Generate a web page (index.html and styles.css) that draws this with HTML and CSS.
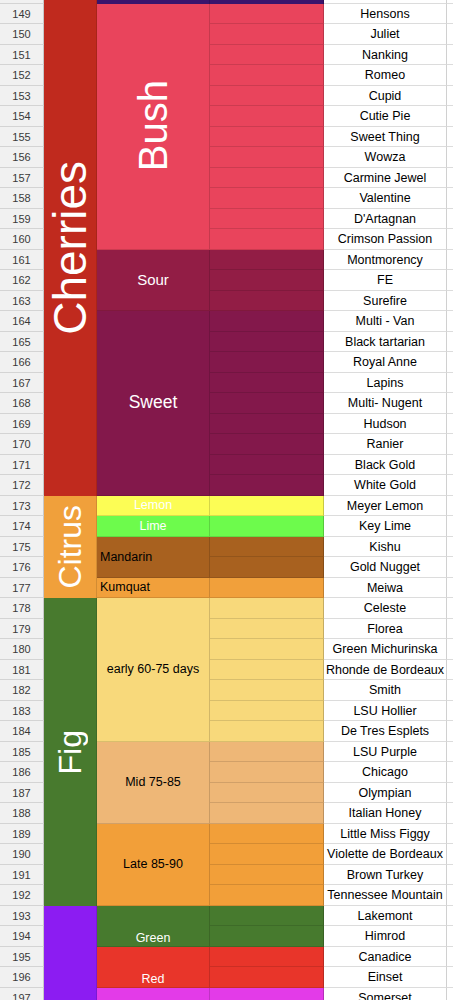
FILE: index.html
```html
<!DOCTYPE html>
<html lang="en">
<head>
    <meta charset="UTF-8">
    <meta name="viewport" content="width=device-width, initial-scale=1.0">
    <title>Fruit Varieties</title>
    <link rel="stylesheet" href="styles.css">
</head>
<body>
    <div class="sheet">
        <!-- partial row above 149 -->
        <div class="n"></div>
        <div class="a cherries s25"><span class="vert big">Cherries</span></div>
        <div class="b top"></div><div class="c top"></div><div class="v"></div><div class="e"></div>

        <div class="n">149</div>
        <div class="b bush s12 light"><span class="vert mid">Bush</span></div>
        <div class="c bush"></div><div class="v">Hensons</div><div class="e"></div>
        <div class="n">150</div><div class="c bush"></div><div class="v">Juliet</div><div class="e"></div>
        <div class="n">151</div><div class="c bush"></div><div class="v">Nanking</div><div class="e"></div>
        <div class="n">152</div><div class="c bush"></div><div class="v">Romeo</div><div class="e"></div>
        <div class="n">153</div><div class="c bush"></div><div class="v">Cupid</div><div class="e"></div>
        <div class="n">154</div><div class="c bush"></div><div class="v">Cutie Pie</div><div class="e"></div>
        <div class="n">155</div><div class="c bush"></div><div class="v">Sweet Thing</div><div class="e"></div>
        <div class="n">156</div><div class="c bush"></div><div class="v">Wowza</div><div class="e"></div>
        <div class="n">157</div><div class="c bush"></div><div class="v">Carmine Jewel</div><div class="e"></div>
        <div class="n">158</div><div class="c bush"></div><div class="v">Valentine</div><div class="e"></div>
        <div class="n">159</div><div class="c bush"></div><div class="v">D'Artagnan</div><div class="e"></div>
        <div class="n">160</div><div class="c bush"></div><div class="v">Crimson Passion</div><div class="e"></div>

        <div class="n">161</div>
        <div class="b sour s3 light sz15">Sour</div>
        <div class="c sour"></div><div class="v">Montmorency</div><div class="e"></div>
        <div class="n">162</div><div class="c sour"></div><div class="v">FE</div><div class="e"></div>
        <div class="n">163</div><div class="c sour"></div><div class="v">Surefire</div><div class="e"></div>

        <div class="n">164</div>
        <div class="b sweet s9 light sz17">Sweet</div>
        <div class="c sweet"></div><div class="v">Multi - Van</div><div class="e"></div>
        <div class="n">165</div><div class="c sweet"></div><div class="v">Black tartarian</div><div class="e"></div>
        <div class="n">166</div><div class="c sweet"></div><div class="v">Royal Anne</div><div class="e"></div>
        <div class="n">167</div><div class="c sweet"></div><div class="v">Lapins</div><div class="e"></div>
        <div class="n">168</div><div class="c sweet"></div><div class="v">Multi- Nugent</div><div class="e"></div>
        <div class="n">169</div><div class="c sweet"></div><div class="v">Hudson</div><div class="e"></div>
        <div class="n">170</div><div class="c sweet"></div><div class="v">Ranier</div><div class="e"></div>
        <div class="n">171</div><div class="c sweet"></div><div class="v">Black Gold</div><div class="e"></div>
        <div class="n">172</div><div class="c sweet"></div><div class="v">White Gold</div><div class="e"></div>

        <div class="n">173</div>
        <div class="a citrus s5"><span class="vert small">Citrus</span></div>
        <div class="b lemon light">Lemon</div>
        <div class="c lemon"></div><div class="v">Meyer Lemon</div><div class="e"></div>
        <div class="n">174</div>
        <div class="b lime light">Lime</div>
        <div class="c lime"></div><div class="v">Key Lime</div><div class="e"></div>
        <div class="n">175</div>
        <div class="b mandarin s2 left">Mandarin</div>
        <div class="c mandarin"></div><div class="v">Kishu</div><div class="e"></div>
        <div class="n">176</div><div class="c mandarin"></div><div class="v">Gold Nugget</div><div class="e"></div>
        <div class="n">177</div>
        <div class="b kumquat left">Kumquat</div>
        <div class="c kumquat"></div><div class="v">Meiwa</div><div class="e"></div>

        <div class="n">178</div>
        <div class="a fig s15"><span class="vert small">Fig</span></div>
        <div class="b early s7">early 60-75 days</div>
        <div class="c early"></div><div class="v">Celeste</div><div class="e"></div>
        <div class="n">179</div><div class="c early"></div><div class="v">Florea</div><div class="e"></div>
        <div class="n">180</div><div class="c early"></div><div class="v">Green Michurinska</div><div class="e"></div>
        <div class="n">181</div><div class="c early"></div><div class="v">Rhonde de Bordeaux</div><div class="e"></div>
        <div class="n">182</div><div class="c early"></div><div class="v">Smith</div><div class="e"></div>
        <div class="n">183</div><div class="c early"></div><div class="v">LSU Hollier</div><div class="e"></div>
        <div class="n">184</div><div class="c early"></div><div class="v">De Tres Esplets</div><div class="e"></div>
        <div class="n">185</div>
        <div class="b midseason s4">Mid 75-85</div>
        <div class="c midseason"></div><div class="v">LSU Purple</div><div class="e"></div>
        <div class="n">186</div><div class="c midseason"></div><div class="v">Chicago</div><div class="e"></div>
        <div class="n">187</div><div class="c midseason"></div><div class="v">Olympian</div><div class="e"></div>
        <div class="n">188</div><div class="c midseason"></div><div class="v">Italian Honey</div><div class="e"></div>
        <div class="n">189</div>
        <div class="b late s4">Late 85-90</div>
        <div class="c late"></div><div class="v">Little Miss Figgy</div><div class="e"></div>
        <div class="n">190</div><div class="c late"></div><div class="v">Violette de Bordeaux</div><div class="e"></div>
        <div class="n">191</div><div class="c late"></div><div class="v">Brown Turkey</div><div class="e"></div>
        <div class="n">192</div><div class="c late"></div><div class="v">Tennessee Mountain</div><div class="e"></div>

        <div class="n">193</div>
        <div class="a grape s5"></div>
        <div class="b green s2 light bottom">Green</div>
        <div class="c green"></div><div class="v">Lakemont</div><div class="e"></div>
        <div class="n">194</div><div class="c green"></div><div class="v">Himrod</div><div class="e"></div>
        <div class="n">195</div>
        <div class="b red s2 light bottom">Red</div>
        <div class="c red"></div><div class="v">Canadice</div><div class="e"></div>
        <div class="n">196</div><div class="c red"></div><div class="v">Einset</div><div class="e"></div>
        <div class="n">197</div>
        <div class="b blue"></div>
        <div class="c blue"></div><div class="v">Somerset</div><div class="e"></div>
    </div>
</body>
</html>
```

FILE: styles.css
```css
* {
    margin: 0;
    padding: 0;
    box-sizing: border-box;
}

body {
    font-family: 'Liberation Sans', Arial, sans-serif;
    background: #fff;
    overflow: hidden;
}

.sheet {
    display: grid;
    grid-template-columns: 44px 53px 113px 114px 123px 6px;
    grid-template-rows: 3.5px repeat(49, 20.5px);
    font-size: 12.5px;
    color: #000;
}

.sheet > div {
    display: flex;
    align-items: center;
    justify-content: center;
    overflow: hidden;
    white-space: nowrap;
}

/* row numbers */
.n {
    background: #f1f1f1;
    border-bottom: 1px solid #d4d4d4;
    border-right: 1px solid #c8c8c8;
    color: #3a3a3a;
    font-size: 11px;
    padding-top: 1px;
}

/* category column */
.a {
    color: #fff;
    border-right: 1px solid rgba(0,0,0,0.12);
}

.vert {
    writing-mode: vertical-rl;
    transform: rotate(180deg);
    line-height: 1;
}

.big { font-size: 46px; }
.mid { font-size: 40px; }
.small { font-size: 32px; }

/* group + colour columns */
.b {
    border-right: 1px solid rgba(0,0,0,0.15);
    border-bottom: 1px solid rgba(0,0,0,0.12);
}

.c {
    border-right: 1px solid rgba(0,0,0,0.2);
    border-bottom: 1px solid rgba(0,0,0,0.12);
}

.light { color: #fff; }
.sz15 { font-size: 15px; }
.sz17 { font-size: 17.5px; }

.sheet > .left {
    justify-content: flex-start;
    padding-left: 3px;
}

.sheet > .bottom {
    align-items: flex-end;
    padding-bottom: 1px;
}

/* variety names */
.v {
    background: #fff;
    border-bottom: 1px solid #dcdcdc;
    border-right: 1px solid #d0d0d0;
    padding-top: 1px;
}

.e {
    background: #fff;
    border-bottom: 1px solid #dcdcdc;
}

.s2 { grid-row: span 2; }
.s3 { grid-row: span 3; }
.s4 { grid-row: span 4; }
.s5 { grid-row: span 5; }
.s7 { grid-row: span 7; }
.s9 { grid-row: span 9; }
.s12 { grid-row: span 12; }
.s15 { grid-row: span 15; }
.s25 { grid-row: span 25; }

/* colours */
.top { background: #3a146c; border-bottom: none; }
.cherries { background: #c02a1e; }
.bush { background: #e9445c; }
.sour { background: #921d45; }
.sweet { background: #83184b; }
.citrus { background: #f0a03b; }
.lemon { background: #fcfd55; }
.lime { background: #6dfb4c; }
.mandarin { background: #a8611f; }
.kumquat { background: #f1a03b; }
.fig { background: #487a2e; }
.early { background: #f8d97b; }
.midseason { background: #eeb777; }
.late { background: #f29f39; }
.grape { background: #8c1cf2; }
.green { background: #477a2e; }
.red { background: #e8352a; }
.blue { background: #e33be8; }
```
